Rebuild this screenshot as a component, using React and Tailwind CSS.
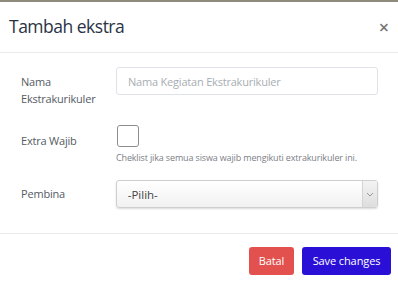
export default function App() {
  return (
    <div
      className="w-[398px] h-[285px] bg-white border-t-2 border-[#8c8b7c] overflow-hidden"
      style={{ fontFamily: '"Open Sans", "Noto Sans", sans-serif' }}
    >
      {/* header */}
      <div className="h-[51px] flex items-center justify-between pl-[9px] pr-[9px] border-b border-[#e9ecef]">
        <h5 className="text-[17.5px] tracking-[-0.5px] font-medium text-[#2a3345] leading-none">Tambah ekstra</h5>
        <button className="text-[18px] leading-none text-[#777] font-semibold">×</button>
      </div>

      {/* body */}
      <div className="pl-[21px] pr-[20px] pt-[14px] h-[181px] border-b border-[#e9ecef]">
        <div className="flex items-start">
          <label className="w-[95px] text-[11px] tracking-[-0.2px] leading-[17px] text-[#555b62] pt-[6px]">
            Nama
            <br />
            Ekstrakurikuler
          </label>
          <input
            type="text"
            placeholder="Nama Kegiatan Ekstrakurikuler"
            className="w-[262px] h-[28px] border border-[#dfe3e8] rounded-[3px] px-[11px] text-[11px] tracking-[-0.2px] text-[#555] placeholder:text-[#a8adb3] outline-none"
          />
        </div>

        <div className="flex items-start mt-[18px]">
          <label className="w-[95px] text-[11px] tracking-[-0.2px] leading-[17px] text-[#555b62] pt-[7px]">Extra Wajib</label>
          <div>
            <div className="w-[22px] h-[22px] border border-[#8e8e8e] rounded-[3px] ml-[1px]" />
            <p className="text-[9px] tracking-[-0.15px] leading-[12px] text-[#7b8087] mt-[5px]">
              Cheklist jika semua siswa wajib mengikuti extrakurikuler ini.
            </p>
          </div>
        </div>

        <div className="flex items-start mt-[16px]">
          <label className="w-[95px] text-[11px] tracking-[-0.2px] leading-[17px] text-[#555b62] pt-[5px]">Pembina</label>
          <div className="w-[263px] h-[28px] flex border border-[#cfcfcf] rounded-[3px] bg-gradient-to-b from-white to-[#f1f1f1] shadow-[0_1px_2px_rgba(0,0,0,0.15)]">
            <span className="flex-1 pl-[11px] text-[11.5px] text-[#444] leading-[28px]">-Pilih-</span>
            <span className="w-[15px] border-l border-[#d4d4d4] flex items-center justify-center bg-gradient-to-b from-[#f3f3f3] to-[#dedede]">
              <svg width="8" height="5" viewBox="0 0 8 5" fill="none" stroke="#999" strokeWidth="1">
                <path d="M1 1l3 3 3-3" />
              </svg>
            </span>
          </div>
        </div>
      </div>

      {/* footer */}
      <div className="flex justify-end gap-[8px] pr-[7px] pt-[13px]">
        <button className="h-[28px] w-[45px] bg-[#e3514f] text-white text-[11px] tracking-[-0.1px] rounded-[3px]">Batal</button>
        <button className="h-[28px] w-[89px] bg-[#2a10d6] text-white text-[11px] tracking-[-0.1px] rounded-[3px]">Save changes</button>
      </div>
    </div>
  );
}
